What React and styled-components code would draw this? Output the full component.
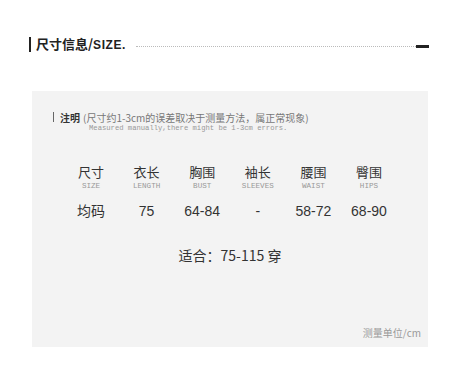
import React from "react";
import styled, { createGlobalStyle } from "styled-components";

const GlobalStyle = createGlobalStyle`
  body {
    margin: 0;
    background: #fff;
    font-family: "Noto Sans CJK SC", "Noto Sans", sans-serif;
  }
`;

const columns = [
  { cn: "尺寸", en: "SIZE", value: "均码" },
  { cn: "衣长", en: "LENGTH", value: "75" },
  { cn: "胸围", en: "BUST", value: "64-84" },
  { cn: "袖长", en: "SLEEVES", value: "-" },
  { cn: "腰围", en: "WAIST", value: "58-72" },
  { cn: "臀围", en: "HIPS", value: "68-90" },
];

const App = () => {
  return (
    <Page>
      <GlobalStyle />
      <Header>
        <HeaderTitle>
          尺寸信息/<HeaderEn>SIZE.</HeaderEn>
        </HeaderTitle>
        <DottedLine />
        <HeaderDash />
      </Header>

      <Panel>
        <Note>
          <NoteTop>
            <NoteLabel>注明</NoteLabel>
            <NoteText>(尺寸约1-3cm的误差取决于测量方法，属正常现象)</NoteText>
          </NoteTop>
          <NoteEn>Measured manually,there might be 1-3cm errors.</NoteEn>
        </Note>

        <Table>
          {columns.map((c) => (
            <Column key={c.en}>
              <ColCn>{c.cn}</ColCn>
              <ColEn>{c.en}</ColEn>
              <ColValue>{c.value}</ColValue>
            </Column>
          ))}
        </Table>

        <Fit>适合：75-115 穿</Fit>

        <Unit>测量单位/cm</Unit>
      </Panel>
    </Page>
  );
};

export default App;

const Page = styled.div`
  width: 460px;
  height: 376px;
  padding-top: 35px;
  box-sizing: border-box;
`;

const Header = styled.div`
  display: flex;
  align-items: center;
  margin: 0 31px 0 29px;
  height: 18px;
`;

const HeaderTitle = styled.div`
  border-left: 2px solid #222;
  padding-left: 5px;
  font-size: 13px;
  font-weight: 700;
  color: #222;
  line-height: 13px;
`;

const HeaderEn = styled.span`
  font-family: "Liberation Sans Narrow", "Liberation Sans", sans-serif;
  font-size: 12px;
  letter-spacing: 0.6px;
`;

const DottedLine = styled.div`
  flex: 1;
  margin: 4px 0 0 10px;
  border-top: 1px dotted #bbb;
`;

const HeaderDash = styled.div`
  width: 13px;
  height: 3px;
  margin-top: 4px;
  background: #222;
`;

const Panel = styled.div`
  margin: 38px 32px 0 32px;
  height: 256px;
  background: #f3f3f3;
  padding-top: 21px;
  box-sizing: border-box;
  display: flex;
  flex-direction: column;
`;

const Note = styled.div`
  margin-left: 21px;
`;

const NoteTop = styled.div`
  display: flex;
  align-items: center;
  border-left: 1px solid #666;
  padding-left: 6px;
  height: 10px;
`;

const NoteLabel = styled.span`
  font-size: 10px;
  font-weight: 700;
  color: #333;
  margin-right: 3px;
`;

const NoteText = styled.span`
  font-size: 10px;
  color: #777;
`;

const NoteEn = styled.div`
  margin: 2px 0 0 36px;
  font-family: "Liberation Mono", monospace;
  font-size: 7.2px;
  color: #999;
  line-height: 9px;
`;

const Table = styled.div`
  display: grid;
  grid-template-columns: repeat(6, 55.6px);
  justify-content: center;
  margin-top: 31px;
`;

const Column = styled.div`
  display: flex;
  flex-direction: column;
  align-items: center;
`;

const ColCn = styled.div`
  font-size: 13px;
  color: #333;
  line-height: 16px;
`;

const ColEn = styled.div`
  font-family: "Liberation Mono", monospace;
  font-size: 7.6px;
  color: #999;
  line-height: 9px;
  margin-top: 2px;
`;

const ColValue = styled.div`
  font-family: "Liberation Sans", "Noto Sans CJK SC", sans-serif;
  font-size: 14px;
  color: #333;
  line-height: 18px;
  margin-top: 11px;
`;

const Fit = styled.div`
  text-align: center;
  font-size: 14px;
  color: #333;
  margin-top: 26px;
  line-height: 18px;
`;

const Unit = styled.div`
  margin-top: auto;
  margin-bottom: 7px;
  align-self: flex-end;
  margin-right: 7px;
  font-size: 10px;
  color: #999;
`;
